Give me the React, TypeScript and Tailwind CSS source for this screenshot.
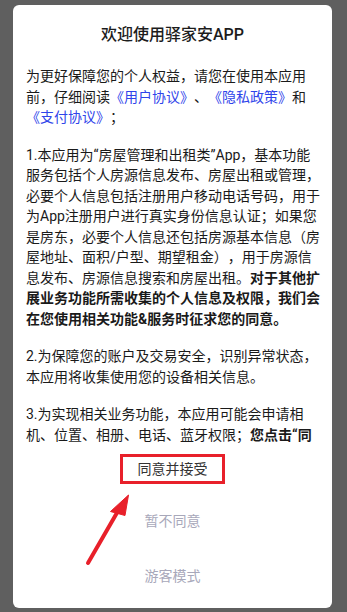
import React from 'react';

const FONT = { fontFamily: 'Roboto, "Noto Sans CJK SC", sans-serif' };

function Link({ children }: { children: React.ReactNode }) {
  return <span className="text-[#2f44ea]">{children}</span>;
}

export default function App() {
  return (
    <div
      className="relative w-[347px] h-[612px] bg-[#5f5f5f] pt-[5px] px-[13px] overflow-hidden [text-spacing-trim:space-all]"
      style={FONT}
    >
      <div className="w-[319px] h-[603px] bg-white rounded-[6px] flex flex-col items-center">
        <h1 className="mt-[18px] h-[24px] leading-[24px] text-[16px] font-medium text-[#1c1c1c]">
          欢迎使用驿家安APP
        </h1>

        <div className="mt-[19px] w-full px-[13px] h-[378px] overflow-hidden text-[14px] leading-[20.5px] text-[#1a1a1a] whitespace-nowrap">
          <p>
            为更好保障您的个人权益，请您在使用本应用
            <br />
            前，仔细阅读<Link>《用户协议》</Link>、<Link>《隐私政策》</Link>和
            <br />
            <Link>《支付协议》</Link>；
          </p>
          <p className="mt-[17px]">
            1.本应用为“房屋管理和出租类”App，基本功能
            <br />
            服务包括个人房源信息发布、房屋出租或管理，
            <br />
            必要个人信息包括注册用户移动电话号码，用于
            <br />
            为App注册用户进行真实身份信息认证；如果您
            <br />
            是房东，必要个人信息还包括房源基本信息（房
            <br />
            屋地址、面积/户型、期望租金），用于房源信
            <br />
            息发布、房源信息搜索和房屋出租。<b className="font-bold">对于其他扩</b>
            <br />
            <b className="font-bold">展业务功能所需收集的个人信息及权限，我们会</b>
            <br />
            <b className="font-bold">在您使用相关功能&服务时征求您的同意。</b>
          </p>
          <p className="mt-[17px]">
            2.为保障您的账户及交易安全，识别异常状态，
            <br />
            本应用将收集使用您的设备相关信息。
          </p>
          <p className="mt-[17px]">
            3.为实现相关业务功能，本应用可能会申请相
            <br />
            机、位置、相册、电话、蓝牙权限；<b className="font-bold">您点击“同</b>
          </p>
        </div>

        <button className="mt-[10px] w-[105px] h-[30px] border-[3px] border-[#e8202a] text-[14px] text-[#333] leading-[20px]">
          同意并接受
        </button>
        <button className="mt-[27px] h-[20px] text-[14px] leading-[20px] text-[#a8a8ba]">暂不同意</button>
        <button className="mt-[35px] h-[20px] text-[14px] leading-[20px] text-[#a8a8ba]">游客模式</button>
      </div>

      <svg className="absolute left-0 top-0" width="347" height="612" viewBox="0 0 347 612">
        <line x1="88" y1="563" x2="118" y2="511" stroke="#e8202a" strokeWidth="4" strokeLinecap="round" />
        <polygon points="128.5,495 110.5,511.5 125,515.5" fill="#e8202a" stroke="#e8202a" strokeWidth="1" strokeLinejoin="round" />
      </svg>
    </div>
  );
}
